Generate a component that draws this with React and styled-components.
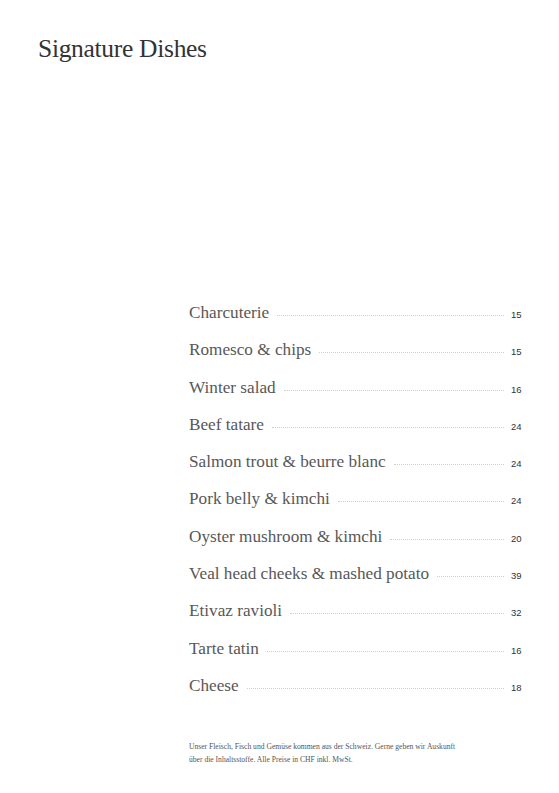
import React from "react";
import styled, { createGlobalStyle } from "styled-components";

const Global = createGlobalStyle`
  html, body { margin: 0; padding: 0; background: #fff; }
  body { font-family: "Liberation Serif", serif; }
`;

const Page = styled.div`
  width: 559px;
  height: 793px;
  box-sizing: border-box;
  padding: 33px 38px 0 38px;
  display: flex;
  flex-direction: column;
`;

const Title = styled.h1`
  margin: 0;
  font-family: "Liberation Serif", serif;
  font-weight: 400;
  font-size: 25.5px;
  line-height: 32px;
  color: #333;
  letter-spacing: -0.3px;
`;

const Menu = styled.div`
  margin: 238px 0 0 151px;
  width: 332px;
  display: flex;
  flex-direction: column;
`;

const Row = styled.div`
  display: flex;
  align-items: baseline;
  height: 37.3px;
`;

const Name = styled.span`
  font-family: "Liberation Serif", serif;
  font-size: 17.2px;
  color: #585858;
  white-space: nowrap;
`;

const Leader = styled.span`
  flex: 1;
  margin: 0 7px 0 8px;
  border-bottom: 1px dotted #cfcfcf;
  position: relative;
  top: -2px;
`;

const Price = styled.span`
  font-family: "Liberation Sans", sans-serif;
  font-size: 9.5px;
  color: #333;
  width: 10px;
  text-align: right;
`;

const Note = styled.p`
  margin: 27px 0 0 151px;
  font-family: "Liberation Serif", serif;
  font-size: 7.6px;
  line-height: 13px;
  color: #555;
`;

const dishes = [
  ["Charcuterie", 15],
  ["Romesco & chips", 15],
  ["Winter salad", 16],
  ["Beef tatare", 24],
  ["Salmon trout & beurre blanc", 24],
  ["Pork belly & kimchi", 24],
  ["Oyster mushroom & kimchi", 20],
  ["Veal head cheeks & mashed potato", 39],
  ["Etivaz ravioli", 32],
  ["Tarte tatin", 16],
  ["Cheese", 18],
];

export default function App() {
  return (
    <>
      <Global />
      <Page>
        <Title>Signature Dishes</Title>
        <Menu>
          {dishes.map(([n, p]) => (
            <Row key={n}>
              <Name>{n}</Name>
              <Leader />
              <Price>{p}</Price>
            </Row>
          ))}
        </Menu>
        <Note>
          Unser Fleisch, Fisch und Gemüse kommen aus der Schweiz. Gerne geben wir Auskunft
          <br />
          über die Inhaltsstoffe. Alle Preise in CHF inkl. MwSt.
        </Note>
      </Page>
    </>
  );
}
